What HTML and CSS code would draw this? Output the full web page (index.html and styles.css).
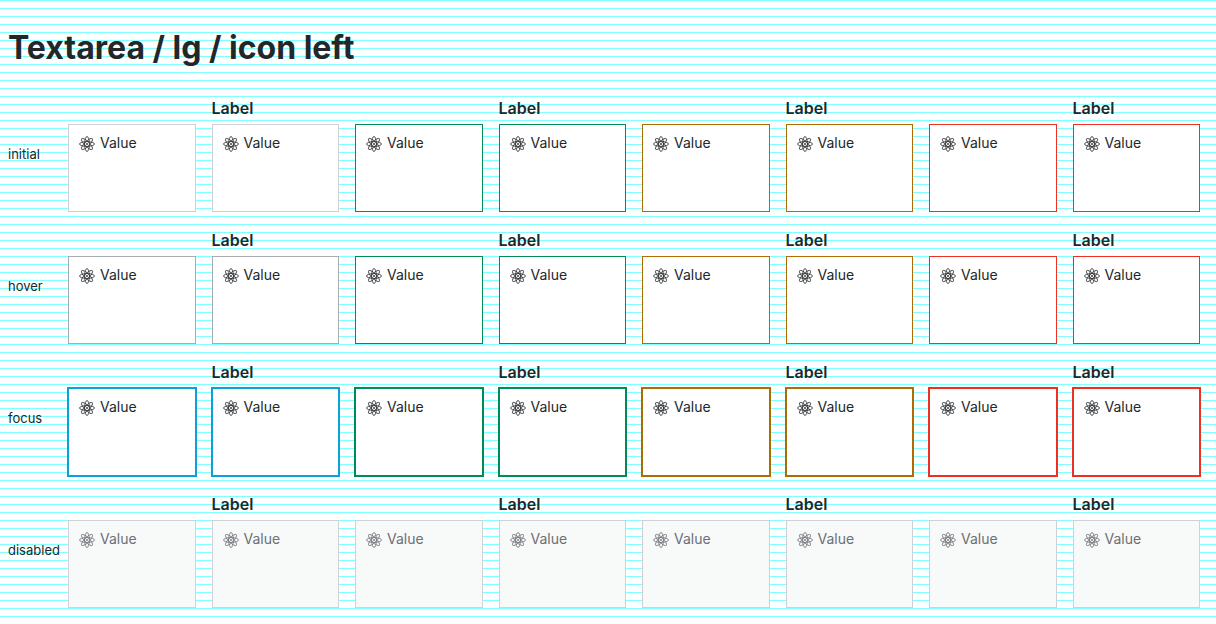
FILE: index.html
```html
<!DOCTYPE html>
<html lang="en">
<head>
<meta charset="utf-8">
<title>Textarea / lg / icon left</title>
<link rel="stylesheet" href="styles.css">
</head>
<body>
<svg class="sprite" aria-hidden="true">
  <symbol id="atom" viewBox="0 0 16 16">
    <g fill="none" stroke="currentColor" stroke-width="0.8">
      <ellipse cx="8" cy="8" rx="7.5" ry="2.4"/>
      <ellipse cx="8" cy="8" rx="7.5" ry="2.4" transform="rotate(45 8 8)"/>
      <ellipse cx="8" cy="8" rx="7.5" ry="2.4" transform="rotate(90 8 8)"/>
      <ellipse cx="8" cy="8" rx="7.5" ry="2.4" transform="rotate(135 8 8)"/>
    </g>
    <circle cx="8" cy="8" r="0.9" fill="currentColor"/>
  </symbol>
</svg>
<main class="page">
  <h1 class="title">Textarea / lg / icon left</h1>
  <table class="matrix">
    <tbody id="rows"></tbody>
  </table>
</main>
<script src="script.js"></script>
</body>
</html>
```
FILE: styles.css
```css
* {
  box-sizing: border-box;
}

body {
  margin: 0;
  min-height: 100vh;
  color: #23272a;
  font-family: Inter, "Liberation Sans", sans-serif;
  background: repeating-linear-gradient(to bottom, #80ffff 0, #80ffff 1px, #ffffff 1px, #ffffff 8px);
}

.sprite {
  position: absolute;
  width: 0;
  height: 0;
}

.page {
  padding: 24px 8px 0 0;
}

.title {
  margin: 0 0 16px;
  padding-left: 8px;
  font-size: 32px;
  font-weight: 700;
  line-height: 48px;
}

.matrix {
  width: 100%;
  border-collapse: separate;
  border-spacing: 0;
}

.state {
  width: 60px;
  padding: 0 0 0 8px;
  font-size: 13px;
  font-weight: 400;
  line-height: 16px;
  text-align: left;
  vertical-align: middle;
  white-space: nowrap;
}

.cell {
  padding: 8px;
  vertical-align: bottom;
}

.label {
  display: block;
  margin-bottom: 4px;
  font-size: 16px;
  font-weight: 600;
  line-height: 24px;
}

.field {
  position: relative;
}

.icon {
  position: absolute;
  top: 12px;
  left: 11px;
  width: 16px;
  height: 16px;
  pointer-events: none;
}

.input {
  display: block;
  width: 100%;
  height: 88px;
  margin: 0;
  padding: 6px 10px 6px 31px;
  border: 1px solid #cfd1d6;
  border-radius: 0;
  outline: none;
  background: #ffffff;
  color: inherit;
  font-family: inherit;
  font-size: 14px;
  line-height: 24px;
  resize: none;
}

.hover .input {
  border-color: #a8abb0;
}

.focus .input {
  border-color: #0ea0d8;
  box-shadow: 0 0 0 1px #0ea0d8;
}

.success .input {
  border-color: #008c53;
}

.warning .input {
  border-color: #b26b00;
}

.error .input {
  border-color: #ee3024;
}

.focus .success .input {
  box-shadow: 0 0 0 1px #008c53;
}

.focus .warning .input {
  box-shadow: 0 0 0 1px #b26b00;
}

.focus .error .input {
  box-shadow: 0 0 0 1px #ee3024;
}

.disabled .field {
  color: #6c6f73;
}

.disabled .input {
  border-color: #cfd1d6;
  background: #f8fafa;
}
```
FILE: script.js
```js
const states = ["initial", "hover", "focus", "disabled"];
const tones = ["neutral", "success", "warning", "error"];

function cell(state, tone, labelled) {
  const id = `${state}-${tone}-${labelled ? "labelled" : "plain"}`;
  const label = labelled ? `<label class="label" for="${id}">Label</label>` : "";
  const name = labelled ? "" : ' aria-label="Value"';
  const disabled = state === "disabled" ? " disabled" : "";
  return `<td class="cell ${tone}">${label}<div class="field">
    <textarea class="input" id="${id}"${name}${disabled}>Value</textarea>
    <svg class="icon" aria-hidden="true"><use href="#atom"/></svg>
  </div></td>`;
}

document.getElementById("rows").innerHTML = states.map((state) =>
  `<tr class="${state}"><th class="state" scope="row">${state}</th>${
    tones.map((tone) => cell(state, tone, false) + cell(state, tone, true)).join("")
  }</tr>`
).join("");
```
